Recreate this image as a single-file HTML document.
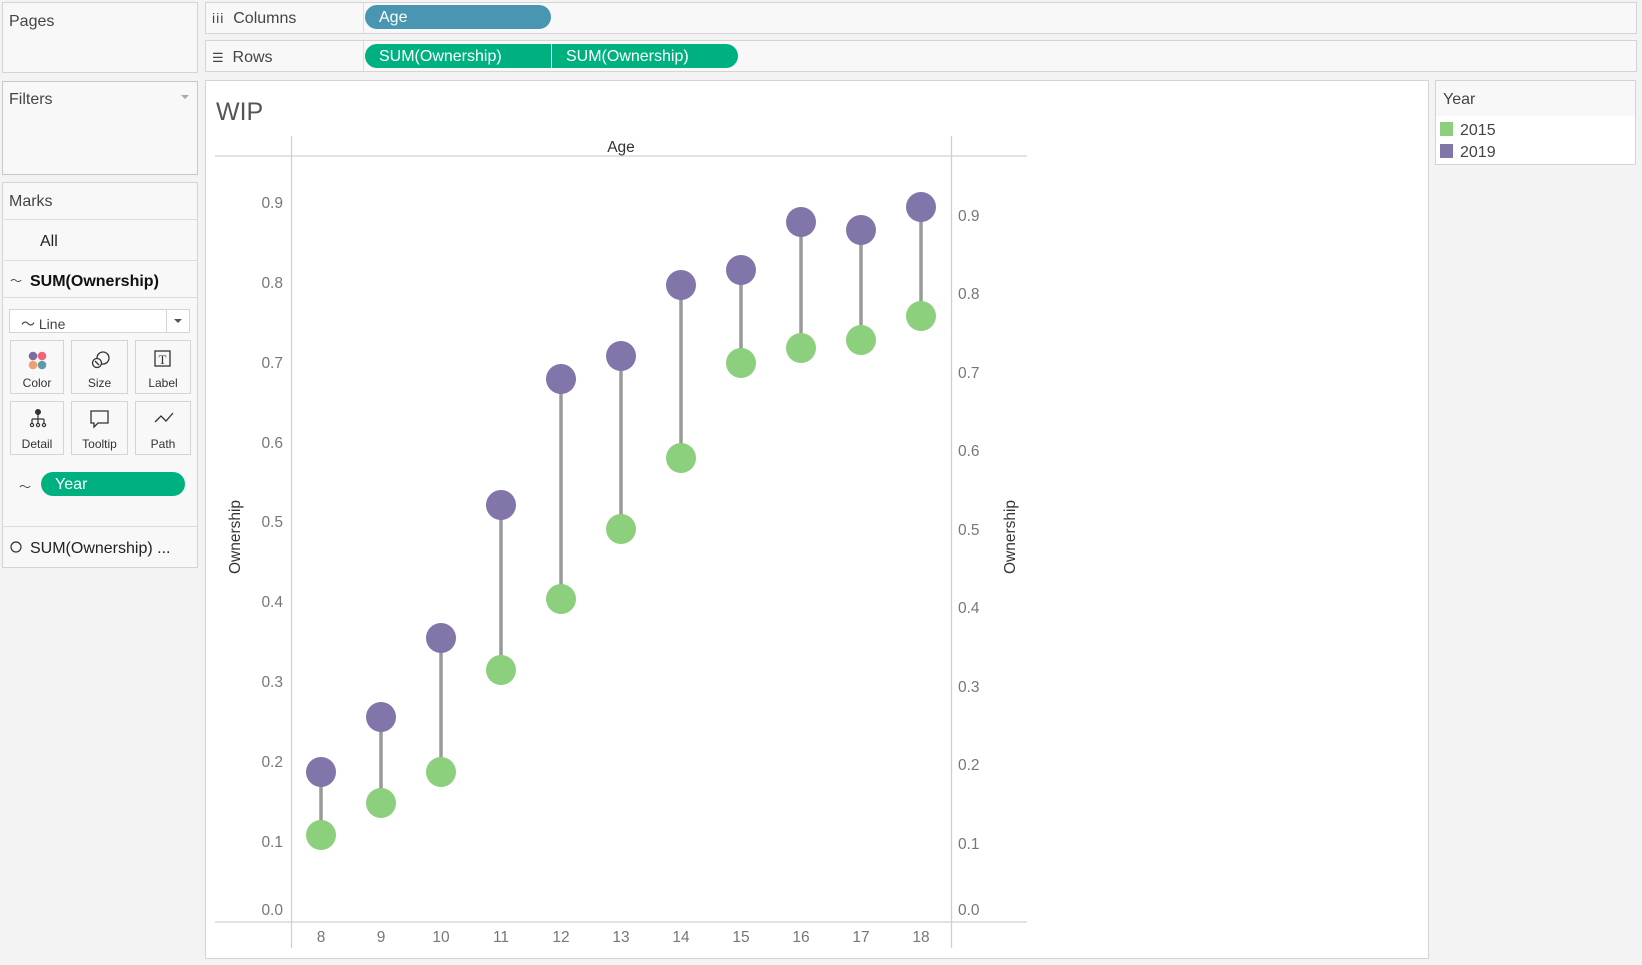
<!DOCTYPE html>
<html><head><meta charset="utf-8"><style>
*{box-sizing:border-box;margin:0;padding:0}
body{width:1642px;height:965px;background:#f3f3f3;font-family:"Liberation Sans",sans-serif;color:#333;position:relative;overflow:hidden}
.a{position:absolute}
.panel{position:absolute;background:#f8f8f8;border:1px solid #d4d4d4}
.t{position:absolute;font-size:16px;color:#444;white-space:nowrap;margin-top:2px}
.pill{position:absolute;border-radius:12px;color:#fff;font-size:16px;padding-left:14px;line-height:26px;height:24px;white-space:nowrap}
.btn{position:absolute;border:1px solid #d4d4d4;background:#f8f8f8;font-size:12px;color:#333;text-align:center}
.btn span{position:absolute;left:0;right:0;bottom:3px}
.sep{position:absolute;left:2px;width:195px;height:1px;background:#ddd}
</style></head><body>
<div class="panel" style="left:2px;top:2px;width:196px;height:71px"></div>
<div class="t" style="left:9px;top:11px">Pages</div>
<div class="panel" style="left:2px;top:81px;width:196px;height:94px;border-color:#c8c8c8"></div>
<div class="t" style="left:9px;top:89px">Filters</div>
<div class="a" style="left:181px;top:95px;width:0;height:0;border-left:4px solid transparent;border-right:4px solid transparent;border-top:4px solid #aaa"></div>
<div class="panel" style="left:2px;top:182px;width:196px;height:386px"></div>
<div class="t" style="left:9px;top:191px">Marks</div>
<div class="sep" style="top:219px"></div>
<div class="t" style="left:40px;top:231px;color:#222">All</div>
<div class="sep" style="top:260px"></div>
<div class="t" style="left:10px;top:270px;font-size:12px">〜</div>
<div class="t" style="left:30px;top:271px;font-weight:bold;color:#111">SUM(Ownership)</div>
<div class="sep" style="top:297px"></div>
<div class="a" style="left:9px;top:309px;width:181px;height:24px;border:1px solid #d4d4d4;background:#fff"></div>
<div class="a" style="left:166px;top:310px;width:1px;height:22px;background:#d4d4d4"></div>
<div class="a" style="left:174px;top:319px;border-left:4px solid transparent;border-right:4px solid transparent;border-top:4px solid #555"></div>
<div class="t" style="left:21px;top:312px;font-size:14px">〜 Line</div>
<div class="btn" style="left:10px;top:340px;width:54px;height:54px">
<svg class="a" style="left:16px;top:9px" width="22" height="20"><circle cx="6" cy="6" r="4.3" fill="#7b6ea0"/><circle cx="15" cy="6" r="4.3" fill="#f06478"/><circle cx="6" cy="15" r="4.3" fill="#f0a070"/><circle cx="15" cy="15" r="4.3" fill="#5e9aa8"/></svg><span>Color</span></div>
<div class="btn" style="left:71px;top:340px;width:57px;height:54px">
<svg class="a" style="left:18px;top:8px" width="22" height="22" fill="none" stroke="#333" stroke-width="1.3"><circle cx="13" cy="9" r="6"/><circle cx="7" cy="14" r="4.5" fill="#f8f8f8"/><path d="M5 12l4 4"/></svg><span>Size</span></div>
<div class="btn" style="left:135px;top:340px;width:56px;height:54px">
<svg class="a" style="left:17px;top:8px" width="20" height="20"><rect x="2" y="2" width="15" height="15" fill="none" stroke="#333" stroke-width="1.3"/><text x="9.5" y="15" font-size="13" text-anchor="middle" font-family="Liberation Serif" fill="#333">T</text></svg><span>Label</span></div>
<div class="btn" style="left:10px;top:401px;width:54px;height:54px">
<svg class="a" style="left:16px;top:6px" width="22" height="22" fill="#333" stroke="#333" stroke-width="1.2"><circle cx="11" cy="4" r="2.4"/><path d="M11 6v5M5 11h12M5 11v4M11 11v4M17 11v4" fill="none"/><circle cx="5" cy="17" r="1.6" fill="none"/><circle cx="11" cy="17" r="1.6" fill="none"/><circle cx="17" cy="17" r="1.6" fill="none"/></svg><span>Detail</span></div>
<div class="btn" style="left:71px;top:401px;width:57px;height:54px">
<svg class="a" style="left:17px;top:7px" width="22" height="22" fill="none" stroke="#333" stroke-width="1.3"><path d="M2 2h17v12H9l-4 4v-4H2z"/></svg><span>Tooltip</span></div>
<div class="btn" style="left:135px;top:401px;width:56px;height:54px">
<svg class="a" style="left:17px;top:8px" width="22" height="16" fill="none" stroke="#333" stroke-width="1.3"><path d="M2 12l6-6 5 5 7-8"/></svg><span>Path</span></div>
<div class="t" style="left:19px;top:476px;font-size:12px">〜</div>
<div class="pill" style="left:41px;top:472px;width:144px;background:#00b180">Year</div>
<div class="sep" style="top:526px"></div>
<svg class="a" style="left:10px;top:541px" width="14" height="14"><circle cx="6" cy="6" r="5" fill="none" stroke="#333" stroke-width="1.2"/></svg>
<div class="t" style="left:30px;top:538px;color:#222">SUM(Ownership) ...</div>
<div class="panel" style="left:205px;top:2px;width:1432px;height:32px"></div>
<div class="a" style="left:363px;top:2px;width:1px;height:32px;background:#ddd"></div>
<div class="t" style="left:212px;top:8px"><b style="font-weight:normal;font-size:14px;letter-spacing:1px">iii</b>&nbsp; Columns</div>
<div class="pill" style="left:365px;top:5px;width:186px;background:#4996b2">Age</div>
<div class="panel" style="left:205px;top:40px;width:1432px;height:32px"></div>
<div class="a" style="left:363px;top:40px;width:1px;height:32px;background:#ddd"></div>
<div class="t" style="left:212px;top:47px"><span style="font-size:13px">☰</span>&nbsp; Rows</div>
<div class="pill" style="left:365px;top:44px;width:186px;background:#00b180;border-radius:12px 0 0 12px">SUM(Ownership)</div>
<div class="pill" style="left:552px;top:44px;width:186px;background:#00b180;border-radius:0 12px 12px 0">SUM(Ownership)</div>
<div class="a" style="left:205px;top:80px;width:1224px;height:879px;background:#fff;border:1px solid #d4d4d4"></div>
<div class="t" style="left:216px;top:96px;font-size:25px;color:#555">WIP</div>
<div class="panel" style="left:1435px;top:80px;width:201px;height:85px;background:#fff"></div>
<div class="a" style="left:1436px;top:81px;width:199px;height:35px;background:#f8f8f8"></div>
<div class="t" style="left:1443px;top:89px">Year</div>
<div class="a" style="left:1440px;top:122px;width:13px;height:14px;background:#8ccf7d"></div>
<div class="t" style="left:1460px;top:120px">2015</div>
<div class="a" style="left:1440px;top:144px;width:13px;height:14px;background:#8175aa"></div>
<div class="t" style="left:1460px;top:142px">2019</div>
<svg class="a" style="left:0;top:0" width="1642" height="965" font-family="Liberation Sans" font-size="15.5" fill="#777">
<g stroke="#d0d0d0" stroke-width="1.3"><line x1="215" y1="156" x2="1027" y2="156"/><line x1="215" y1="922" x2="1027" y2="922"/><line x1="291.5" y1="136" x2="291.5" y2="948"/><line x1="951.5" y1="136" x2="951.5" y2="948"/></g>
<text x="621" y="152" text-anchor="middle" fill="#333">Age</text>
<g text-anchor="end"><text x="283" y="208">0.9</text><text x="283" y="288">0.8</text><text x="283" y="368">0.7</text><text x="283" y="448">0.6</text><text x="283" y="527">0.5</text><text x="283" y="607">0.4</text><text x="283" y="687">0.3</text><text x="283" y="767">0.2</text><text x="283" y="847">0.1</text><text x="283" y="915">0.0</text></g>
<g><text x="958" y="221">0.9</text><text x="958" y="299">0.8</text><text x="958" y="378">0.7</text><text x="958" y="456">0.6</text><text x="958" y="535">0.5</text><text x="958" y="613">0.4</text><text x="958" y="692">0.3</text><text x="958" y="770">0.2</text><text x="958" y="849">0.1</text><text x="958" y="915">0.0</text></g>
<text transform="translate(240,537) rotate(-90)" text-anchor="middle" fill="#333">Ownership</text>
<text transform="translate(1015,537) rotate(-90)" text-anchor="middle" fill="#333">Ownership</text>
<g text-anchor="middle"><text x="321" y="942">8</text><text x="381" y="942">9</text><text x="441" y="942">10</text><text x="501" y="942">11</text><text x="561" y="942">12</text><text x="621" y="942">13</text><text x="681" y="942">14</text><text x="741" y="942">15</text><text x="801" y="942">16</text><text x="861" y="942">17</text><text x="921" y="942">18</text></g>
<g stroke="#999" stroke-width="3.5"><line x1="321" y1="772" x2="321" y2="835"/><line x1="381" y1="717" x2="381" y2="803"/><line x1="441" y1="638" x2="441" y2="772"/><line x1="501" y1="505" x2="501" y2="670"/><line x1="561" y1="379" x2="561" y2="599"/><line x1="621" y1="356" x2="621" y2="529"/><line x1="681" y1="285" x2="681" y2="458"/><line x1="741" y1="270" x2="741" y2="363"/><line x1="801" y1="222" x2="801" y2="348"/><line x1="861" y1="230" x2="861" y2="340"/><line x1="921" y1="207" x2="921" y2="316"/></g>
<g fill="#8ccf7d"><circle cx="321" cy="835" r="15"/><circle cx="381" cy="803" r="15"/><circle cx="441" cy="772" r="15"/><circle cx="501" cy="670" r="15"/><circle cx="561" cy="599" r="15"/><circle cx="621" cy="529" r="15"/><circle cx="681" cy="458" r="15"/><circle cx="741" cy="363" r="15"/><circle cx="801" cy="348" r="15"/><circle cx="861" cy="340" r="15"/><circle cx="921" cy="316" r="15"/></g>
<g fill="#8175aa"><circle cx="321" cy="772" r="15"/><circle cx="381" cy="717" r="15"/><circle cx="441" cy="638" r="15"/><circle cx="501" cy="505" r="15"/><circle cx="561" cy="379" r="15"/><circle cx="621" cy="356" r="15"/><circle cx="681" cy="285" r="15"/><circle cx="741" cy="270" r="15"/><circle cx="801" cy="222" r="15"/><circle cx="861" cy="230" r="15"/><circle cx="921" cy="207" r="15"/></g>
</svg>
</body></html>
